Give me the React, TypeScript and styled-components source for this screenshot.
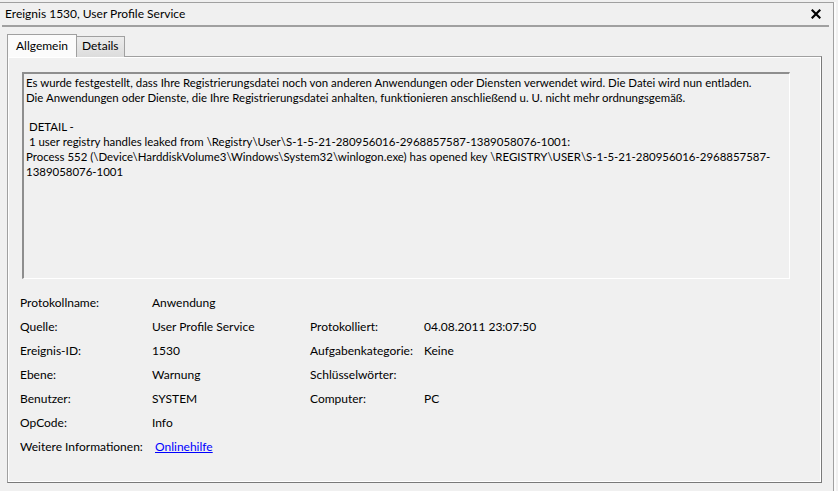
import React from "react";
import styled, {createGlobalStyle} from "styled-components";

const GlobalStyle = createGlobalStyle`
  html, body {
    margin: 0;
    padding: 0;
    background: #f0f0f0;
  }
  body {
    font-family: Lato, "Noto Sans", sans-serif;
    font-size: 12px;
    color: #000;
  }
`

const Frame = styled.div`
  box-sizing: border-box;
  width: 834px;
  height: 489px;
  margin-top: 2px;
  border-top: 1px solid #a0a0a0;
  border-right: 1px solid #a0a0a0;
  box-shadow: 2px 0 0 #fbfbfb;
  display: flex;
  flex-direction: column;
`

const TitleBar = styled.div`
  height: 22px;
  display: flex;
  align-items: center;
  justify-content: space-between;
  padding: 0 12px 0 5px;
`

const Title = styled.span`
  line-height: 16px;
`

const CloseButton = styled.button`
  width: 10px;
  height: 10px;
  padding: 0;
  border: none;
  background: none;
  display: flex;
  cursor: pointer;
`

const Divider = styled.div`
  height: 2px;
  margin: 0 4px 0 2px;
  background: #a0a0a0;
`

const TabStrip = styled.div`
  display: flex;
  align-items: flex-end;
  margin: 7px 0 0 7px;
  height: 23px;
`

const Tab = styled.div<{ $active?: boolean }>`
  box-sizing: border-box;
  height: ${p => p.$active ? 23 : 21}px;
  padding: 0 ${p => p.$active ? 8 : 5}px ${p => p.$active ? 0 : 2}px ${p => p.$active ? 8 : 5}px;
  display: flex;
  align-items: center;
  border: 1px solid #a0a0a0;
  border-bottom: none;
  background: ${p => p.$active ? '#fbfbfb' : 'linear-gradient(#ececec, #dcdcdc)'};
  margin-right: ${p => p.$active ? -1 : 0}px;
  position: relative;
  z-index: ${p => p.$active ? 1 : 0};
  line-height: 16px;
`

const Panel = styled.div`
  box-sizing: border-box;
  width: 815px;
  height: 427px;
  margin-left: 7px;
  margin-top: -1px;
  border: 1px solid #a0a0a0;
  border-right-color: #7a7a7a;
  border-bottom-color: #7a7a7a;
  box-shadow: inset 1px 1px 0 #fff, inset -1px -1px 0 #fff;
  padding: 15px 12px 0 12px;
`

const MessageBox = styled.div`
  box-sizing: border-box;
  width: 768px;
  height: 207px;
  margin-left: 2px;
  border-top: 2px solid #8e8e8e;
  border-left: 2px solid #8e8e8e;
  border-right: 1px solid #fff;
  border-bottom: 1px solid #fff;
  padding: 2px 4px 0 2px;
  white-space: pre;
  overflow: hidden;
  font-size: 11.45px;
  line-height: 14.8px;
`

const Props = styled.div`
  display: grid;
  grid-template-columns: 132px 158px 114px 1fr;
  grid-auto-rows: 24px;
  align-items: center;
  margin-top: 11px;
`

const Link = styled.a`
  color: #0000ff;
  text-decoration: underline;
  padding-left: 3px;
`

const XIcon = () => (
  <svg width="10" height="10" viewBox="0 0 10 10">
    <path d="M1.5 1.5 L8.5 8.5 M8.5 1.5 L1.5 8.5" stroke="#000" strokeWidth="2.2" strokeLinecap="square"/>
  </svg>
)

const message = `Es wurde festgestellt, dass Ihre Registrierungsdatei noch von anderen Anwendungen oder Diensten verwendet wird. Die Datei wird nun entladen.
Die Anwendungen oder Dienste, die Ihre Registrierungsdatei anhalten, funktionieren anschließend u. U. nicht mehr ordnungsgemäß.

 DETAIL -
 1 user registry handles leaked from \\Registry\\User\\S-1-5-21-280956016-2968857587-1389058076-1001:
Process 552 (\\Device\\HarddiskVolume3\\Windows\\System32\\winlogon.exe) has opened key \\REGISTRY\\USER\\S-1-5-21-280956016-2968857587-
1389058076-1001`

const rows: [string, React.ReactNode, string, string][] = [
  ['Protokollname:', 'Anwendung', '', ''],
  ['Quelle:', 'User Profile Service', 'Protokolliert:', '04.08.2011 23:07:50'],
  ['Ereignis-ID:', '1530', 'Aufgabenkategorie:', 'Keine'],
  ['Ebene:', 'Warnung', 'Schlüsselwörter:', ''],
  ['Benutzer:', 'SYSTEM', 'Computer:', 'PC'],
  ['OpCode:', 'Info', '', ''],
  ['Weitere Informationen:', <Link href="#">Onlinehilfe</Link>, '', ''],
]

export default function App() {
  return (
    <>
      <GlobalStyle/>
      <Frame>
        <TitleBar>
          <Title>Ereignis 1530, User Profile Service</Title>
          <CloseButton><XIcon/></CloseButton>
        </TitleBar>
        <Divider/>
        <TabStrip>
          <Tab $active>Allgemein</Tab>
          <Tab>Details</Tab>
        </TabStrip>
        <Panel>
          <MessageBox>{message}</MessageBox>
          <Props>
            {rows.map((r, i) => (
              <React.Fragment key={i}>
                <span>{r[0]}</span>
                <span>{r[1]}</span>
                <span>{r[2]}</span>
                <span>{r[3]}</span>
              </React.Fragment>
            ))}
          </Props>
        </Panel>
      </Frame>
    </>
  )
}
